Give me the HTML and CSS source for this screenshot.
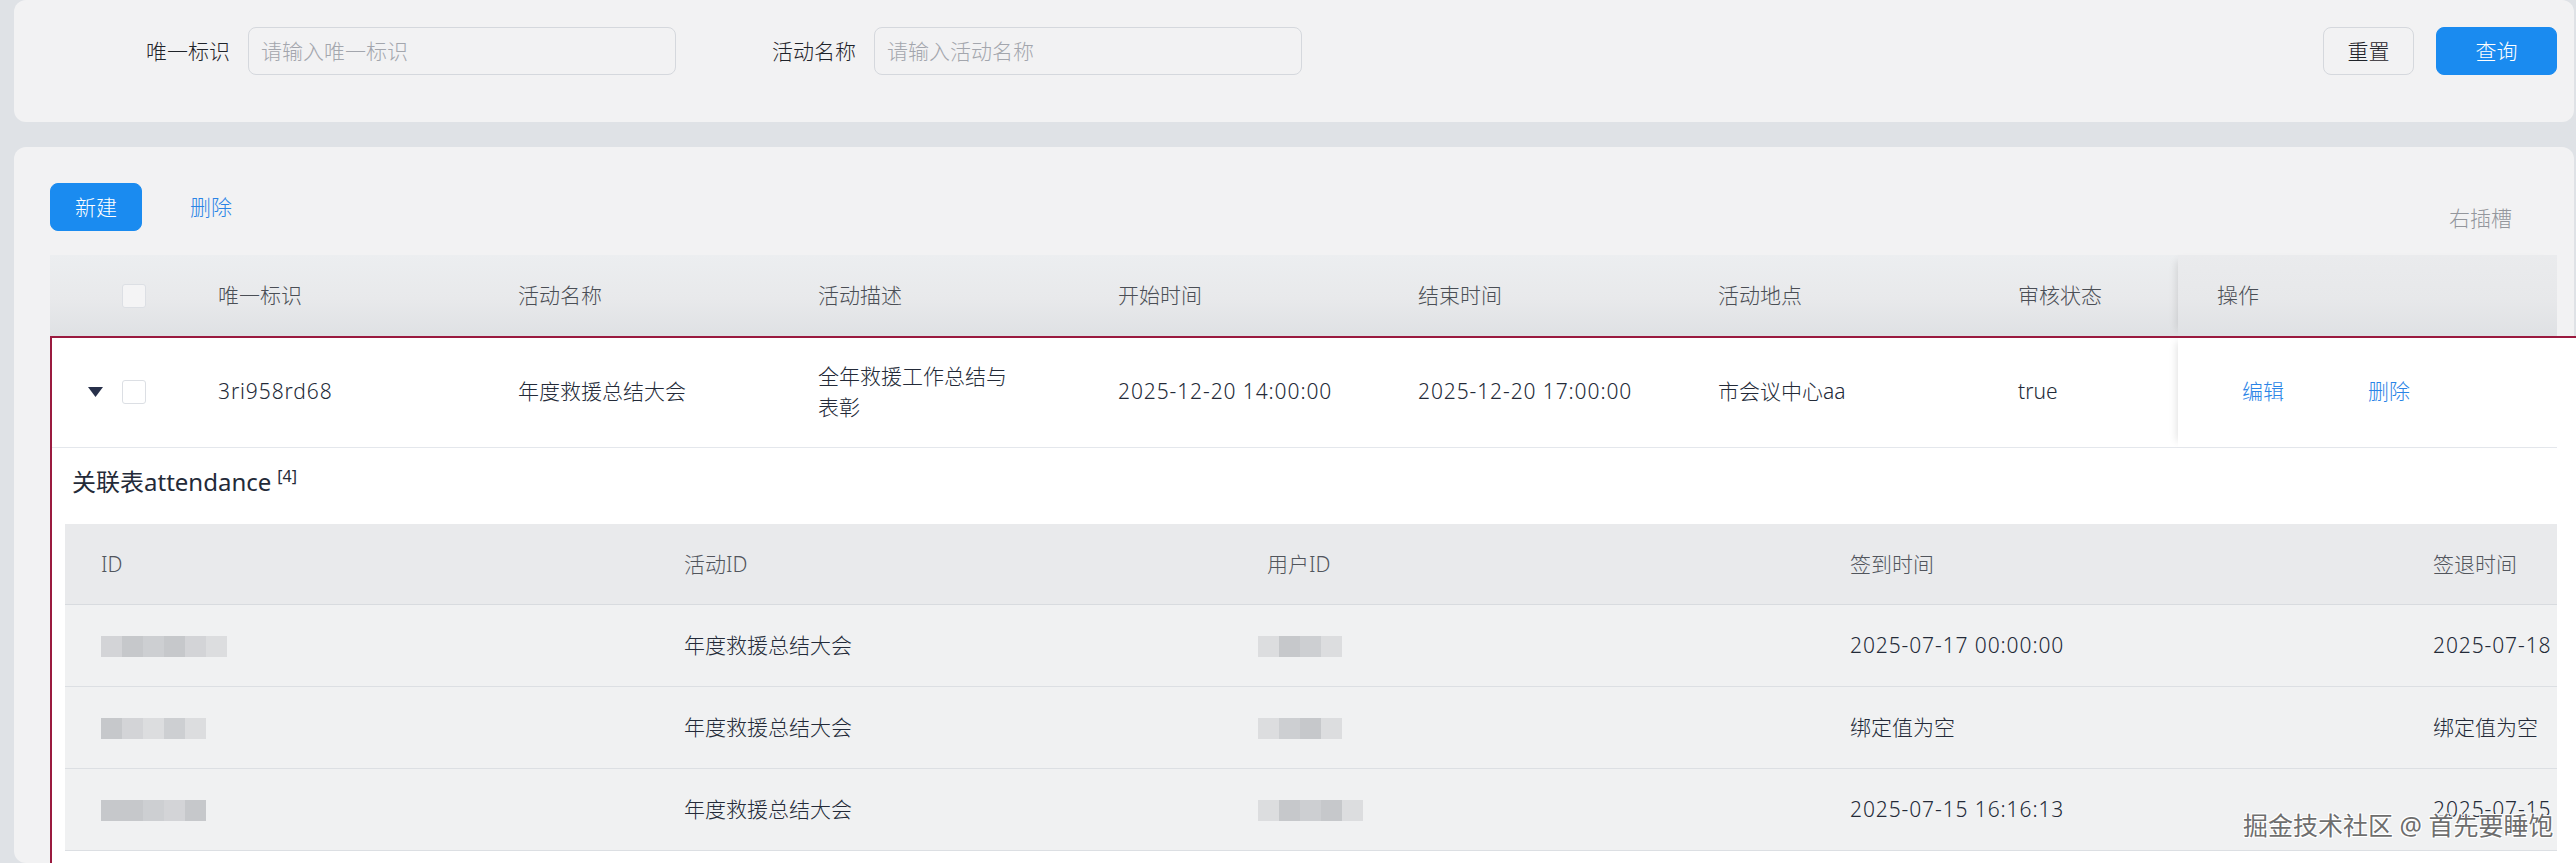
FILE: index.html
```html
<!DOCTYPE html>
<html lang="zh-CN">
<head>
<meta charset="utf-8">
<title>活动管理</title>
<link rel="stylesheet" href="styles.css">
</head>
<body>
<div class="page">
  <section class="card search">
    <form class="form">
      <div class="item">
        <label class="label">唯一标识</label>
        <input class="input" placeholder="请输入唯一标识">
      </div>
      <div class="item">
        <label class="label">活动名称</label>
        <input class="input" placeholder="请输入活动名称">
      </div>
      <div class="actions">
        <button type="button" class="btn btn-reset">重置</button>
        <button type="button" class="btn primary btn-query">查询</button>
      </div>
    </form>
  </section>

  <section class="card list">
    <div class="toolbar">
      <button type="button" class="btn primary btn-new">新建</button>
      <span class="link link-del">删除</span>
      <span class="slot">右插槽</span>
    </div>

    <div class="table">
      <div class="thead">
        <div class="c c-exp"></div>
        <div class="c c-sel"><span class="checkbox"></span></div>
        <div class="c c-data">唯一标识</div>
        <div class="c c-data">活动名称</div>
        <div class="c c-data">活动描述</div>
        <div class="c c-data">开始时间</div>
        <div class="c c-data">结束时间</div>
        <div class="c c-data">活动地点</div>
        <div class="c c-status">审核状态</div>
        <div class="c c-op">操作</div>
      </div>

      <div class="tbody">
        <div class="tbody-inner">
          <div class="tr">
            <div class="c c-exp"><svg class="caret" width="15" height="10" viewBox="0 0 15 10"><path d="M0 0H15L7.5 10Z"/></svg></div>
            <div class="c c-sel"><span class="checkbox white"></span></div>
            <div class="c c-data num">3ri958rd68</div>
            <div class="c c-data">年度救援总结大会</div>
            <div class="c c-data"><span class="desc">全年救援工作总结与表彰</span></div>
            <div class="c c-data num">2025-12-20 14:00:00</div>
            <div class="c c-data num">2025-12-20 17:00:00</div>
            <div class="c c-data">市会议中心aa</div>
            <div class="c c-status">true</div>
            <div class="c c-op"><span class="link">编辑</span><span class="link">删除</span></div>
          </div>

          <div class="expand">
            <div class="expand-title">关联表attendance<sup class="count">[4]</sup></div>
            <div class="sub">
              <div class="sub-head">
                <div class="sc">ID</div>
                <div class="sc">活动ID</div>
                <div class="sc">用户ID</div>
                <div class="sc">签到时间</div>
                <div class="sc">签退时间</div>
              </div>
              <div class="sub-row">
                <div class="sc"><span class="blur"><i class="s1"></i><i class="s2"></i><i class="s3"></i><i class="s2"></i><i class="s1"></i><i class="s4"></i></span></div>
                <div class="sc">年度救援总结大会</div>
                <div class="sc"><span class="blur uid"><i class="s4"></i><i class="s2"></i><i class="s3"></i><i class="s4"></i></span></div>
                <div class="sc num">2025-07-17 00:00:00</div>
                <div class="sc num">2025-07-18 00:00:00</div>
              </div>
              <div class="sub-row">
                <div class="sc"><span class="blur"><i class="s2"></i><i class="s1"></i><i class="s4"></i><i class="s3"></i><i class="s4"></i></span></div>
                <div class="sc">年度救援总结大会</div>
                <div class="sc"><span class="blur uid"><i class="s4"></i><i class="s3"></i><i class="s2"></i><i class="s4"></i></span></div>
                <div class="sc">绑定值为空</div>
                <div class="sc">绑定值为空</div>
              </div>
              <div class="sub-row">
                <div class="sc"><span class="blur"><i class="s2"></i><i class="s2"></i><i class="s3"></i><i class="s1"></i><i class="s2"></i></span></div>
                <div class="sc">年度救援总结大会</div>
                <div class="sc"><span class="blur uid"><i class="s4"></i><i class="s2"></i><i class="s3"></i><i class="s2"></i><i class="s4"></i></span></div>
                <div class="sc num">2025-07-15 16:16:13</div>
                <div class="sc num">2025-07-15 18:00:00</div>
              </div>
            </div>
          </div>
        </div>
        <div class="highlight"></div>
      </div>
    </div>
  </section>

  <div class="watermark">掘金技术社区 @ 首先要睡饱</div>
</div>
</body>
</html>
```

FILE: styles.css
```css
html, body {
  margin: 0;
  padding: 0;
}

body {
  width: 2576px;
  height: 863px;
  overflow: hidden;
  background: #dfe2e6;
  font-family: "Noto Sans", "Noto Sans CJK SC", sans-serif;
  font-size: 21px;
  font-weight: 300;
  line-height: 31px;
  color: #22262d;
}

.page {
  position: relative;
  padding-left: 14px;
}

.card {
  width: 2560px;
  box-sizing: border-box;
  background: #f2f2f3;
  border-radius: 12px;
}

/* search card */
.search {
  height: 122px;
  padding: 27px 17px 0 36px;
}

.form {
  display: flex;
  align-items: center;
  height: 48px;
  margin: 0;
}

.item {
  display: flex;
  align-items: center;
}

.label {
  width: 198px;
  box-sizing: border-box;
  padding-right: 18px;
  text-align: right;
  color: #1f2329;
}

.input {
  width: 428px;
  height: 48px;
  box-sizing: border-box;
  border: 1px solid #d5d8dd;
  border-radius: 8px;
  background: #f2f2f3;
  padding: 0 12px;
  font: inherit;
  color: #303133;
  outline: none;
}

.input::placeholder {
  color: #a3a6ad;
}

.actions {
  margin-left: auto;
  display: flex;
  gap: 22px;
}

.btn {
  height: 48px;
  box-sizing: border-box;
  border: 1px solid #d5d8dd;
  border-radius: 8px;
  background: #f2f2f3;
  padding: 0;
  font: inherit;
  color: #1f2329;
}

.btn.primary {
  background: #1a8bf0;
  border-color: #1a8bf0;
  color: #fff;
}

.btn-reset { width: 91px; }
.btn-query { width: 121px; }
.btn-new { width: 92px; }

/* list card */
.list {
  margin-top: 25px;
  height: 716px;
  padding: 36px 17px 0 36px;
}

.toolbar {
  display: flex;
  height: 48px;
  margin-bottom: 24px;
}

.link {
  color: #2a84e6;
}

.link-del {
  margin-left: 48px;
  line-height: 48px;
}

.slot {
  margin-left: auto;
  margin-right: 45px;
  padding-top: 20px;
  color: #93969c;
}

/* main table */
.table {
  width: 2507px;
}

.thead {
  display: flex;
  height: 81px;
  background: linear-gradient(#eceef0, #e8e9eb 55%, #dfe1e4);
  color: #4a4e55;
}

.c {
  display: flex;
  align-items: center;
  box-sizing: border-box;
  flex: none;
}

.c-exp {
  width: 72px;
  justify-content: flex-end;
  padding-right: 19px;
}

.c-sel { width: 78px; }

.c-data {
  width: 300px;
  padding-left: 18px;
}

.c-status {
  width: 178px;
  padding-left: 18px;
}

.c-op {
  width: 379px;
  padding-left: 39px;
  box-shadow: -7px 0 8px -6px rgba(0, 0, 0, 0.12);
}

.thead .c-op {
  background: linear-gradient(#eaebed, #e7e8ea 55%, #dfe1e4);
}

.num {
  letter-spacing: 0.9px;
}

.checkbox {
  width: 24px;
  height: 24px;
  box-sizing: border-box;
  border: 1px solid #dcdfe4;
  border-radius: 3px;
  background: #f4f4f5;
}

.checkbox.white { background: #fff; }

.caret { fill: #27304a; }

.tbody {
  position: relative;
  margin-right: -40px;
  height: 560px;
  background: #fff;
}

.tbody-inner {
  width: 2507px;
  overflow: hidden;
}

.tr {
  display: flex;
  height: 112px;
  box-sizing: border-box;
  border-bottom: 1px solid #e4e7ec;
  background: #fff;
  color: #232a38;
}

.tr .c-op {
  background: #fff;
  padding-left: 64px;
  gap: 84px;
}

.desc {
  max-width: 200px;
}

.highlight {
  position: absolute;
  inset: 0;
  border-top: 2px solid #9a1a3f;
  border-left: 2px solid #9a1a3f;
  pointer-events: none;
}

/* expanded sub table */
.expand-title {
  padding: 16px 0 0 22px;
  margin-bottom: 24px;
  font-size: 24px;
  line-height: 36px;
  font-weight: 400;
  color: #232a38;
}

.count {
  font-size: 16px;
  line-height: 0;
  vertical-align: 9px;
  margin-left: 6px;
}

.sub {
  margin-left: 15px;
  width: 2915px;
}

.sub-head,
.sub-row {
  display: flex;
  align-items: center;
}

.sub-head {
  height: 81px;
  box-sizing: border-box;
  border-bottom: 1px solid #d8dbdf;
  background: #e9eaec;
  color: #51555c;
}

.sub-row {
  height: 82px;
  box-sizing: border-box;
  border-bottom: 1px solid #dcdfe3;
  background: #f0f1f2;
  color: #232a38;
}

.sc {
  width: 583px;
  flex: none;
  box-sizing: border-box;
  padding-left: 36px;
  white-space: nowrap;
}

.blur {
  display: flex;
  height: 21px;
  margin-top: 2px;
}

.blur.uid { margin-left: -9px; }

.blur i {
  display: block;
  width: 21px;
  height: 21px;
}

.blur .s1 { background: #d3d4d7; }
.blur .s2 { background: #c6c8cb; }
.blur .s3 { background: #cdcfd2; }
.blur .s4 { background: #dcdddf; }

.watermark {
  position: absolute;
  left: 2243px;
  top: 808px;
  font-size: 25px;
  line-height: 34px;
  font-weight: 400;
  color: #6e6e6e;
  text-shadow: 1px 1px 0 #fff, -1px -1px 0 #fff, 1px -1px 0 #fff, -1px 1px 0 #fff;
  white-space: nowrap;
}
```
